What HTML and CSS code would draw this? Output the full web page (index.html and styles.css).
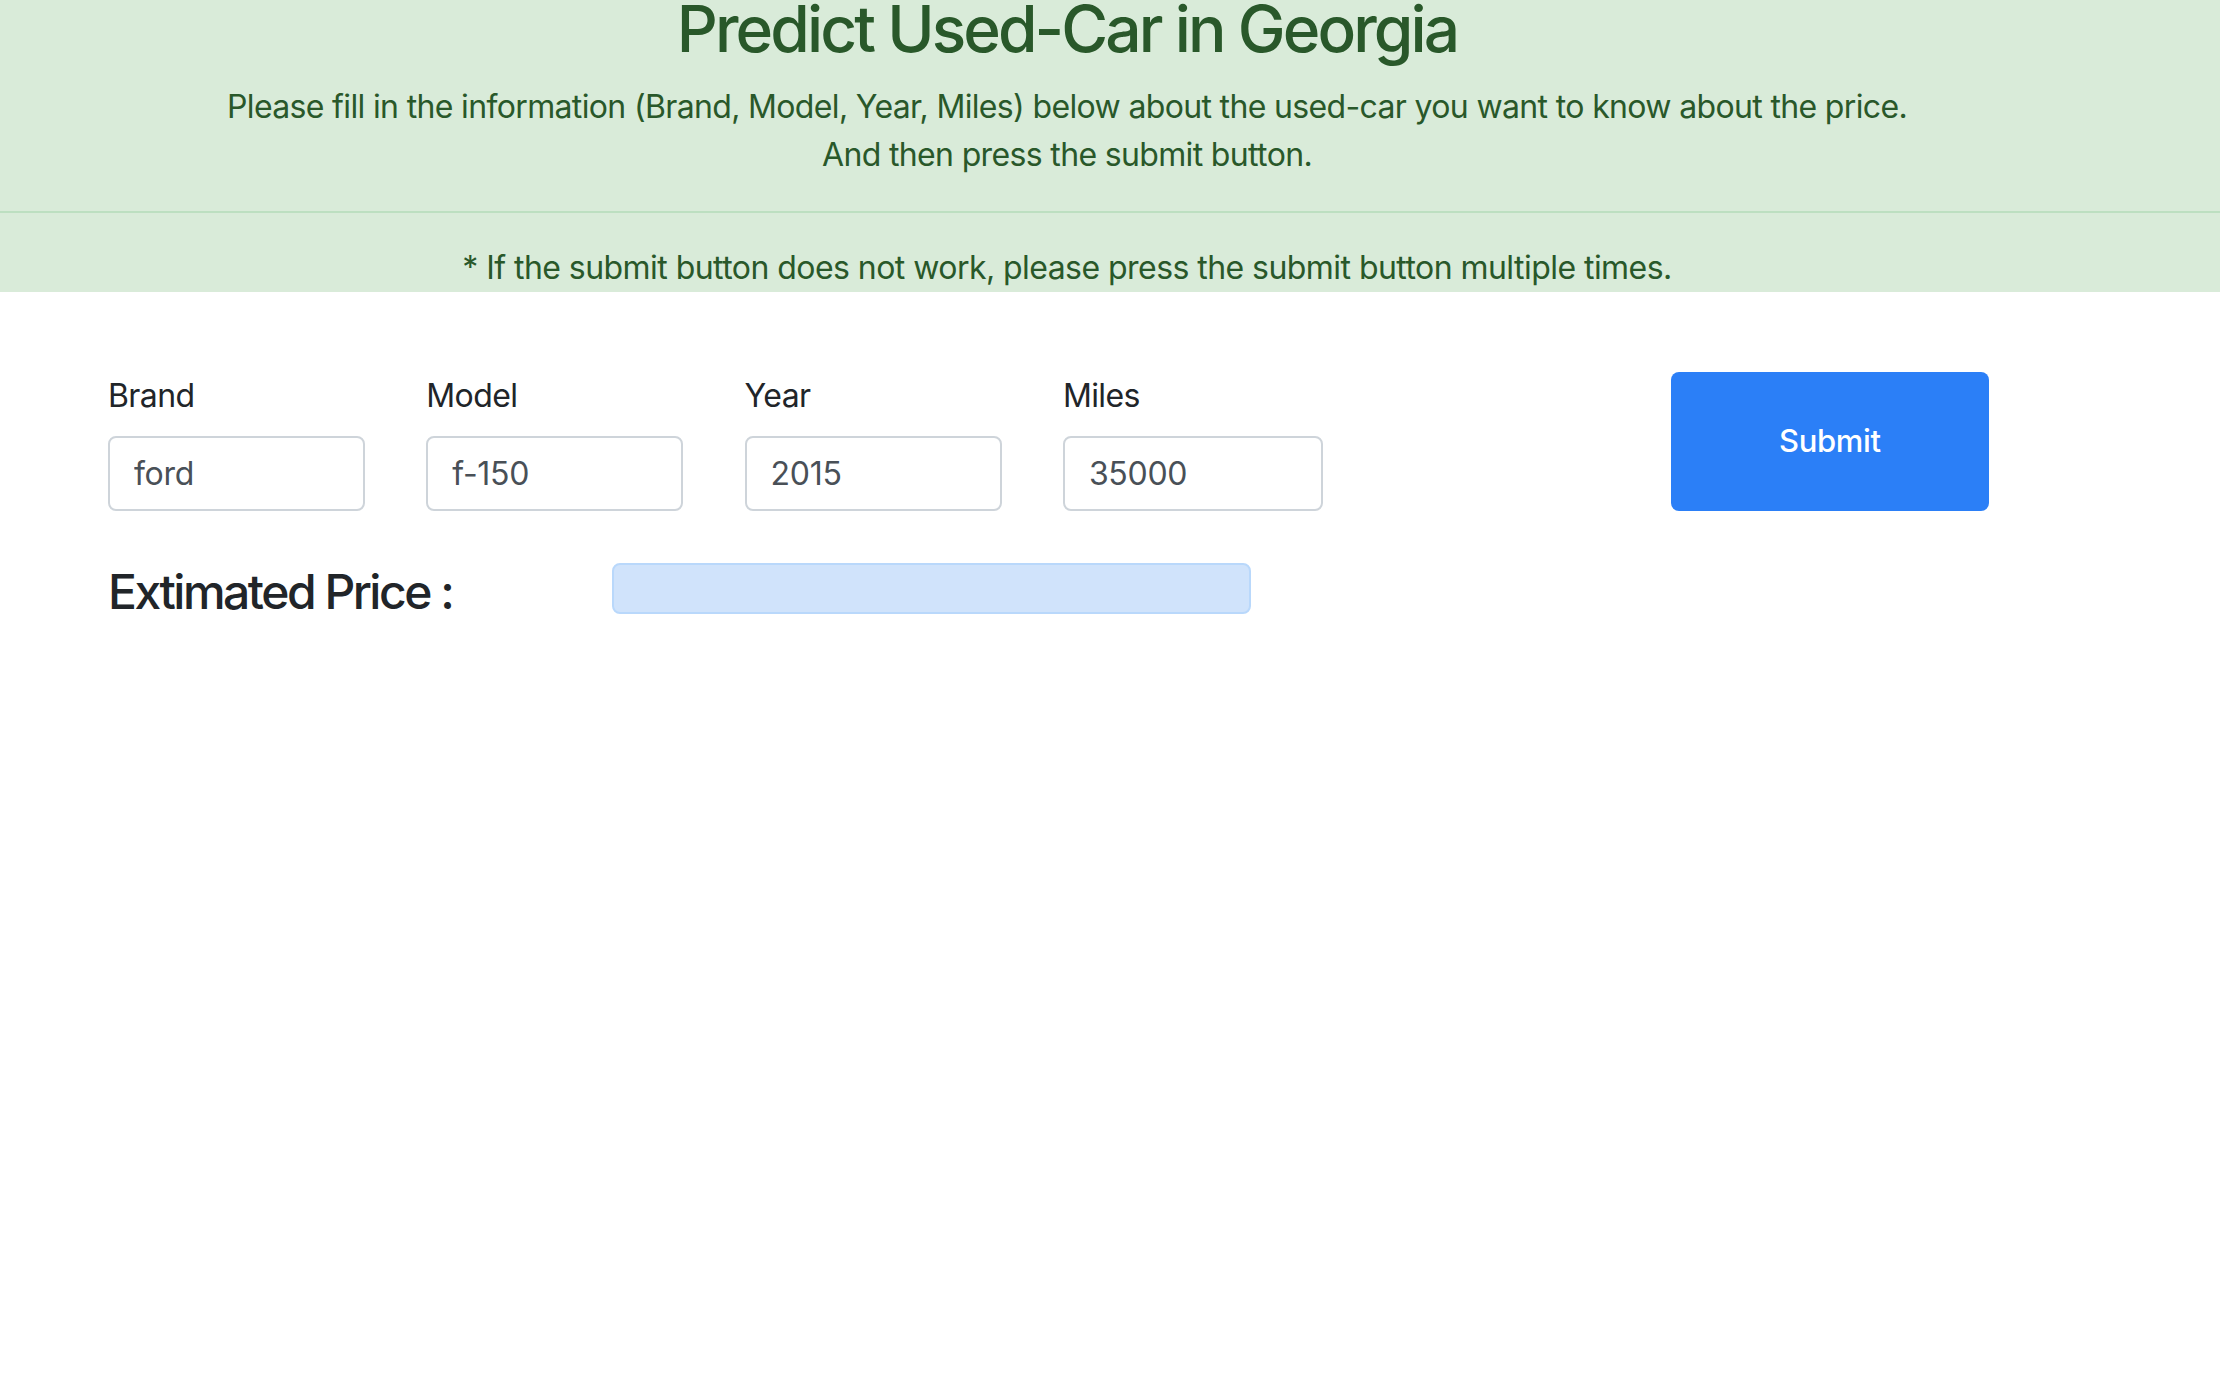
FILE: index.html
```html
<!DOCTYPE html>
<html lang="en">
<head>
<meta charset="utf-8">
<title>Predict Used-Car in Georgia</title>
<link rel="stylesheet" href="styles.css">
</head>
<body>
<header class="banner">
  <h2 class="title">Predict Used-Car in Georgia</h2>
  <p class="intro">Please fill in the information (Brand, Model, Year, Miles) below about the used-car you want to know about the price.<br>And then press the submit button.</p>
  <hr class="divider">
  <p class="note">* If the submit button does not work, please press the submit button multiple times.</p>
</header>
<main class="content">
  <form class="form-row">
    <div class="fields">
      <div class="field">
        <label class="field-label" for="brand">Brand</label>
        <input class="field-input" id="brand" type="text" value="ford">
      </div>
      <div class="field">
        <label class="field-label" for="model">Model</label>
        <input class="field-input" id="model" type="text" value="f-150">
      </div>
      <div class="field">
        <label class="field-label" for="year">Year</label>
        <input class="field-input" id="year" type="text" value="2015">
      </div>
      <div class="field field-wide">
        <label class="field-label" for="miles">Miles</label>
        <input class="field-input" id="miles" type="text" value="35000">
      </div>
    </div>
    <button class="submit" type="button">Submit</button>
  </form>
  <div class="result-row">
    <h4 class="result-label">Extimated Price :</h4>
    <div class="result-box"></div>
  </div>
</main>
</body>
</html>
```

FILE: styles.css
```css
html, body {
  margin: 0;
  padding: 0;
}

body {
  font-family: Inter, "Noto Sans", "Liberation Sans", sans-serif;
  background: #ffffff;
  color: #212529;
}

.banner {
  background: #d9ebd9;
  color: #29582a;
  text-align: center;
}

.title,
.intro,
.note {
  padding-right: 86px;
}

.title {
  font-size: 64px;
  font-weight: 500;
  line-height: 58px;
  margin: 0 0 25px;
  letter-spacing: -2.9px;
}

.intro,
.note {
  font-size: 32px;
  line-height: 48px;
  margin: 0;
  letter-spacing: -0.65px;
}

.note {
  letter-spacing: -0.55px;
  line-height: 46.5px;
}

.divider {
  height: 0;
  border: 0;
  border-top: 2px solid #bddfc1;
  margin: 32px 0;
}

.content {
  padding: 80px 0 0 108px;
}

.form-row {
  display: flex;
  align-items: stretch;
  margin: 0;
}

.fields {
  display: flex;
  gap: 61.3px;
}

.field {
  width: 257px;
}

.field-wide {
  width: 260px;
}

.field-label {
  display: block;
  font-size: 32px;
  line-height: 48px;
  margin-bottom: 16px;
  color: #212529;
  letter-spacing: -0.6px;
}

.field-input {
  display: block;
  width: 100%;
  height: 75px;
  box-sizing: border-box;
  padding: 12px 24px;
  font-family: inherit;
  font-size: 32px;
  line-height: 47px;
  color: #495057;
  background: #ffffff;
  border: 2px solid #ced4da;
  border-radius: 8px;
  outline: none;
  letter-spacing: -0.3px;
}

.submit {
  margin-left: 348px;
  width: 318px;
  background: #2b7ff7;
  color: #ffffff;
  border: 0;
  border-radius: 8px;
  font-family: inherit;
  font-size: 31px;
  font-weight: 500;
  line-height: 48px;
  padding: 0;
  cursor: pointer;
  letter-spacing: -0.3px;
}

.result-row {
  display: flex;
  align-items: flex-start;
  margin-top: 52px;
}

.result-label {
  width: 504px;
  margin: 0;
  font-size: 48px;
  font-weight: 500;
  line-height: 1.2;
  color: #212529;
  letter-spacing: -2.5px;
}

.result-box {
  width: 639px;
  height: 51px;
  box-sizing: border-box;
  background: #d0e3fb;
  border: 2px solid #b9d8fb;
  border-radius: 8px;
}
```
